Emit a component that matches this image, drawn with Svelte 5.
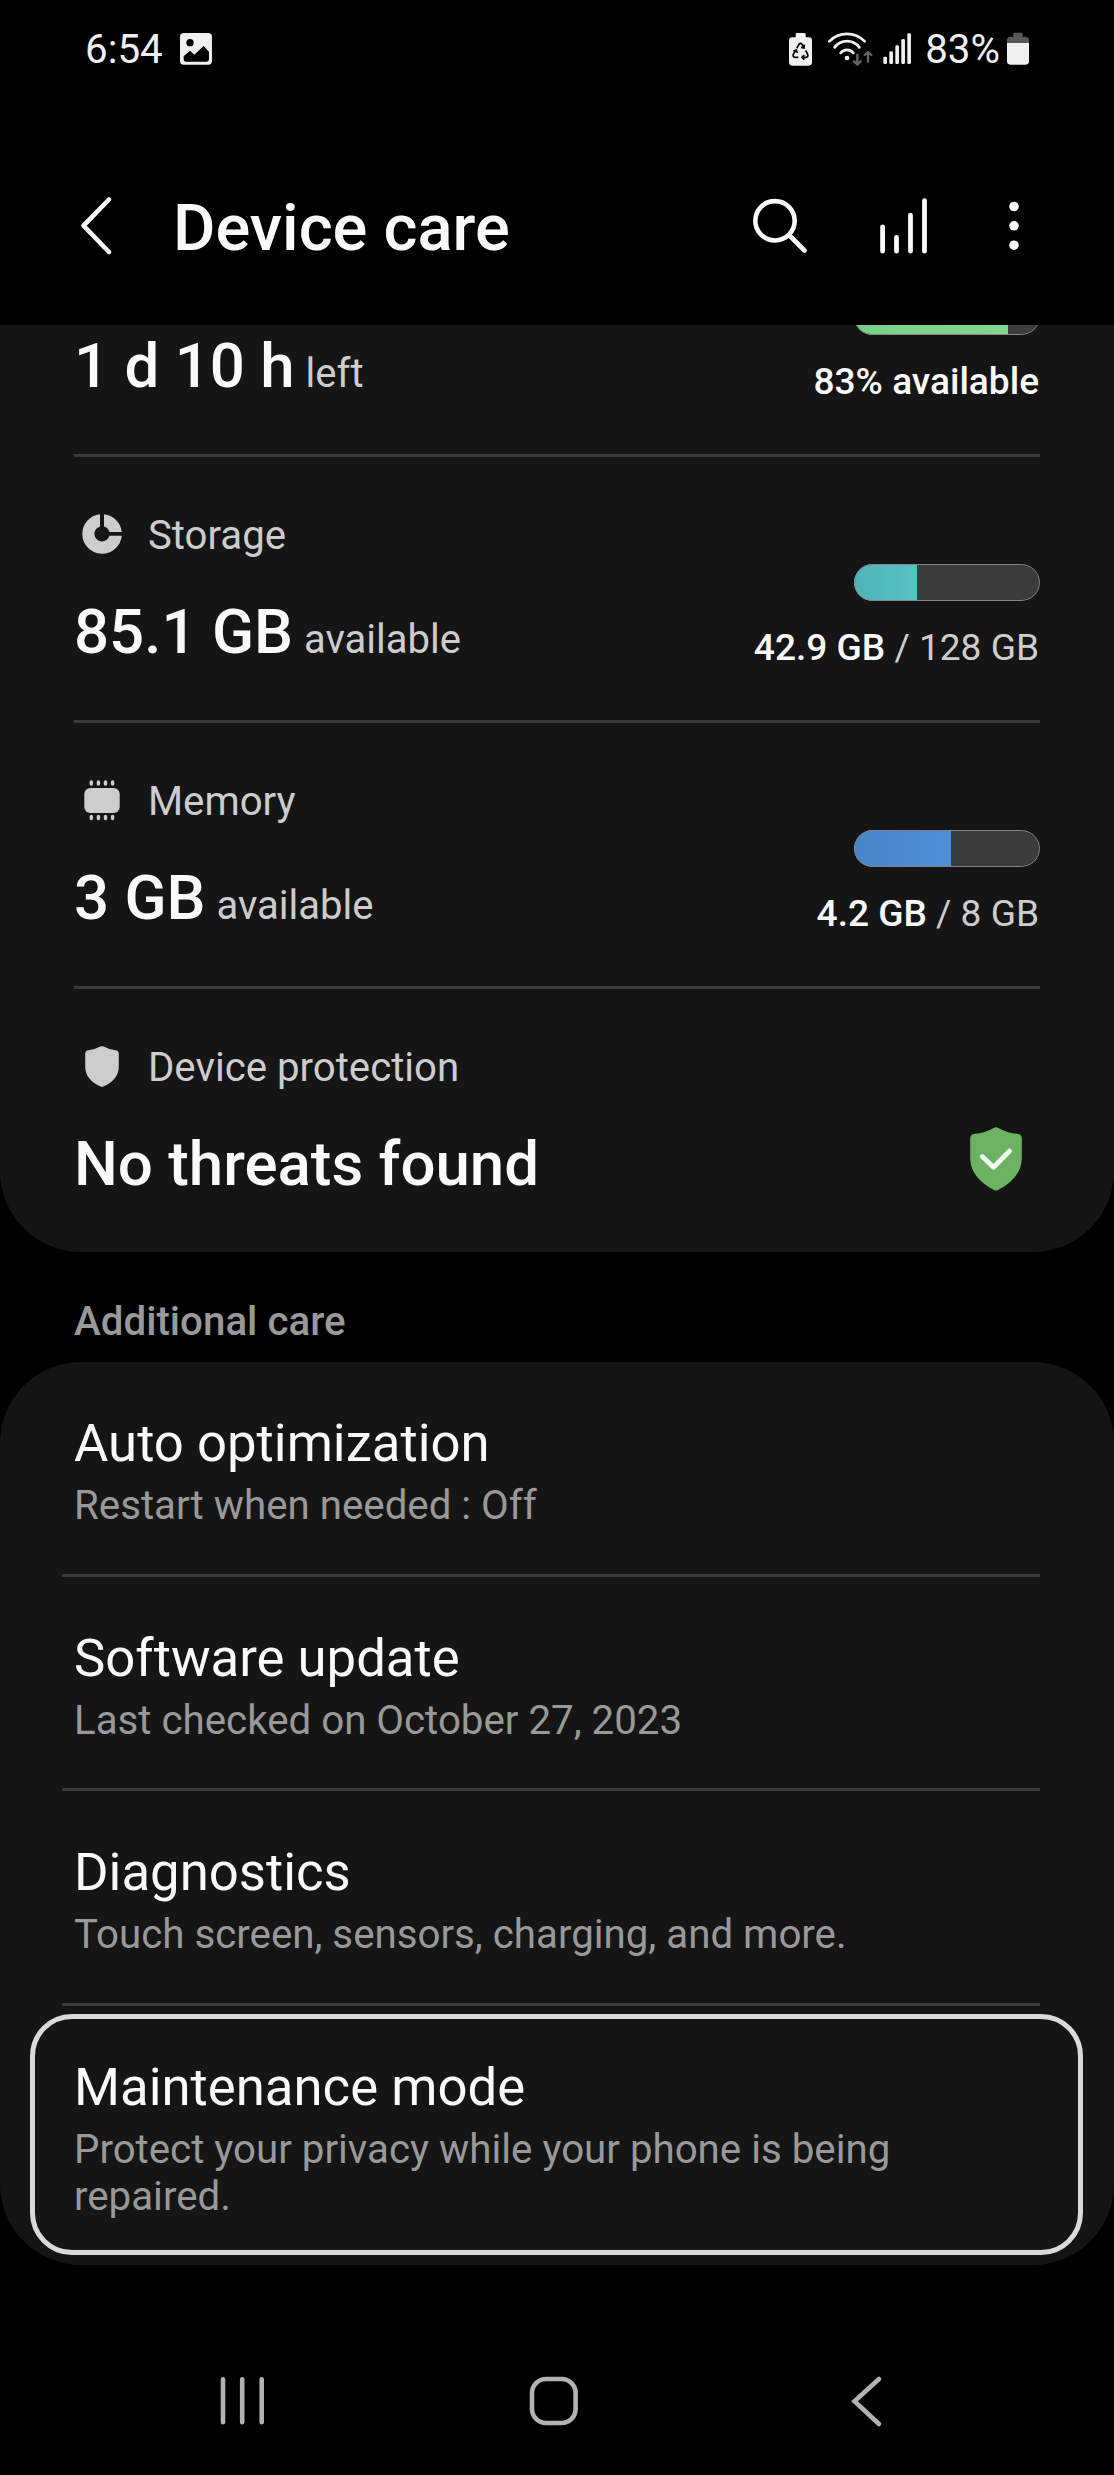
<script>
  const resources = [
    { id: 'battery', value: '1 d 10 h', unit: 'left', used: '83% available', percent: 83 },
    { id: 'storage', label: 'Storage', value: '85.1 GB', unit: 'available', used: '42.9 GB', total: '128 GB', percent: 34 },
    { id: 'memory', label: 'Memory', value: '3 GB', unit: 'available', used: '4.2 GB', total: '8 GB', percent: 52 },
    { id: 'protection', label: 'Device protection', value: 'No threats found' }
  ];

  const options = [
    { title: 'Auto optimization', detail: 'Restart when needed : Off' },
    { title: 'Software update', detail: 'Last checked on October 27, 2023' },
    { title: 'Diagnostics', detail: 'Touch screen, sensors, charging, and more.' },
    { title: 'Maintenance mode', detail: 'Protect your privacy while your phone is being repaired.', focused: true }
  ];
</script>

<div class="phone">
  <div class="status">
    <div class="status-left">
      <span>6:54</span>
      <svg width="32.3" height="40" viewBox="361 57 97 120" fill="#f0f0f0">
        <rect x="361" y="69" width="96" height="95" rx="11" />
        <circle cx="391" cy="98" r="11" fill="#000" />
        <path d="M372 139 391 122 404 134 432 108 448 125V147Q448 155 440 155H380Q372 155 372 147Z" fill="#000" />
      </svg>
    </div>
    <div class="status-right">
      <svg width="23" height="40" viewBox="57 57 69 120" fill="#f0f0f0">
        <path d="M77 82V73Q77 69 81 69H103Q107 69 107 73V82H116Q126 82 126 92V157Q126 167 116 167H67Q57 167 57 157V92Q57 82 67 82Z" />
        <g fill="none" stroke="#000" stroke-width="5">
          <path d="M80 115 87 103Q91 97 96 103L101 112M103 104 102 114 93 112" />
          <path d="M78 120 70 133Q67 141 75 142H85M70 123 79 120 82 129" />
          <path d="M107 121 113 133Q116 141 108 142H97M103 135 96 142 103 149" />
        </g>
      </svg>
      <svg class="wifi" width="45" height="40" viewBox="174 57 135 120" fill="none" stroke="#f0f0f0" stroke-width="8" stroke-linecap="round">
        <path d="M178 94A73.6 73.6 0 0 1 284 94M194 112A46 46 0 0 1 268 112M212 129A24 24 0 0 1 250 129" />
        <circle cx="231" cy="144" r="7" fill="#f0f0f0" stroke="none" />
        <path d="M262 134V162M252 154 262 163 272 154M294 155V126M284 135 294 126 304 135" stroke="#666" stroke-width="7" />
      </svg>
      <svg class="signal" width="28.3" height="40" viewBox="338 57 85 120" fill="#f0f0f0">
        <rect x="339" y="140" width="11" height="22" rx="4" />
        <rect x="357" y="124" width="11" height="38" rx="4" />
        <rect x="375" y="106" width="11" height="56" rx="4" />
        <rect x="393" y="87" width="11" height="75" rx="4" />
        <rect x="411" y="70" width="11" height="92" rx="4" />
      </svg>
      <span>83%</span>
      <svg class="charge" width="22" height="40" viewBox="710 57 66 120">
        <path d="M729 80V72Q729 68 733 68H753Q757 68 757 72V80H765Q776 80 776 91V104H710V91Q710 80 721 80Z" fill="#585858" />
        <path d="M710 99H776V154Q776 164 766 164H720Q710 164 710 154Z" fill="#f0f0f0" />
      </svg>
    </div>
  </div>

  <header>
    <svg class="back" width="40" height="64" viewBox="76 194 40 64" fill="none" stroke="#fafafa" stroke-width="4.6" stroke-linecap="round" stroke-linejoin="round">
      <path d="M109 199.5 83.5 225.7 109 252" />
    </svg>
    <h1>Device care</h1>
    <svg width="56" height="64" viewBox="752 194 56 64" fill="none" stroke="#fafafa" stroke-width="4.6" stroke-linecap="round">
      <circle cx="775" cy="220.8" r="19.7" />
      <path d="M789.5 235.5 804.5 250.5" />
    </svg>
    <svg class="usage-icon" width="48" height="64" viewBox="880 194 48 64" fill="none" stroke="#fafafa" stroke-width="4.8" stroke-linecap="round">
      <path d="M882.6 226.8V251.2M896.5 237.5V251.2M910.5 215.2V251.2M924.5 200.6V251.2" />
    </svg>
    <svg class="more" width="12" height="64" viewBox="1007.7 194 12 64" fill="#fafafa">
      <circle cx="1013.7" cy="206.5" r="4.8" />
      <circle cx="1013.7" cy="225.8" r="4.8" />
      <circle cx="1013.7" cy="245.2" r="4.8" />
    </svg>
  </header>

  <section class="card resources">
    {#each resources as item}
      <div class="resource {item.id}">
        <div class="summary">
          {#if item.label}
            <div class="label">
              <svg width="40" height="44" viewBox="0 0 40 44" fill="#cdcdcd">
                {#if item.id === 'storage'}
                  <path d="M18 .2A19.8 19.8 0 1 0 39.8 21.8H27.4A7.6 7.6 0 1 1 18 12.6ZM22 .2A19.8 19.8 0 0 1 39.7 18H27.4A7.6 7.6 0 0 0 22 12.6Z" />
                {:else if item.id === 'memory'}
                  <rect x="2.3" y="8" width="35.4" height="25" rx="6" />
                  <path d="M9.3 2V4M16.4 2V4M23.5 2V4M30.6 2V4M9.3 36.5V38.5M16.4 36.5V38.5M23.5 36.5V38.5M30.6 36.5V38.5" stroke="#cdcdcd" stroke-width="3.4" stroke-linecap="round" />
                {:else}
                  <path d="M18.3.6Q20-.2 21.7.6Q27 3.6 33.5 4.2Q36.8 4.5 36.8 7.8V21Q36.4 34 21.4 40.5Q20 41.2 18.6 40.5Q3.6 34 3.2 21V7.8Q3.2 4.5 6.5 4.2Q13 3.6 18.3.6Z" />
                {/if}
              </svg>
              <span>{item.label}</span>
            </div>
          {/if}
          <div class="value">{item.value}{#if item.unit}<small>&nbsp;{item.unit}</small>{/if}</div>
        </div>
        {#if item.used}
          <div class="usage">
            <div class="meter"><div class="fill" style="width: {item.percent}%"></div></div>
            <div class="amount"><b>{item.used}</b>{#if item.total}&nbsp;/ {item.total}{/if}</div>
          </div>
        {:else}
          <svg class="shield" width="52" height="64" viewBox="0 0 52 64">
            <path d="M23.6.9Q26-.4 28.4.9Q37 6 47.5 6.8Q51.8 7.2 51.8 11.5V32Q51 51 28 63Q26 64 24 63Q1 51 .2 32V11.5Q.2 7.2 4.5 6.8Q15 6 23.6.9Z" fill="#6bb363" />
            <path d="M12.3 29.5 23.5 40.3 39.5 24" fill="none" stroke="#f2faf1" stroke-width="4.8" stroke-linecap="round" stroke-linejoin="round" />
          </svg>
        {/if}
      </div>
    {/each}
  </section>

  <h2>Additional care</h2>

  <section class="card options">
    {#each options as option}
      <div class="option" class:focused={option.focused}>
        <div class="title">{option.title}</div>
        <div class="detail">{option.detail}</div>
      </div>
    {/each}
  </section>

  <nav>
    <svg width="60" height="60" viewBox="0 0 60 60" stroke-linecap="round">
      <path d="M11 8.2V51.2M30.2 8.2V51.2M49.7 8.2V51.2" />
    </svg>
    <svg width="60" height="60" viewBox="0 0 60 60">
      <rect x="8" y="8" width="43.6" height="44" rx="14" />
    </svg>
    <svg width="60" height="60" viewBox="0 0 60 60" stroke-linecap="round">
      <path d="M42 8 17.5 30.2 42 53" />
    </svg>
  </nav>
</div>

<style>
  :global(body) {
    margin: 0;
    background: #000;
  }

  .phone {
    width: 1114px;
    height: 2475px;
    overflow: hidden;
    background: #000;
    color: #fafafa;
    font-family: Roboto, sans-serif;
  }

  svg {
    display: block;
    flex: none;
  }

  .status {
    display: flex;
    justify-content: space-between;
    height: 98px;
    padding: 0 85px;
    box-sizing: border-box;
    color: #f0f0f0;
    font-size: 40.3px;
    line-height: 48px;
  }

  .status-left,
  .status-right {
    display: flex;
    align-items: center;
  }

  .status-left span {
    margin-top: 1px;
  }

  .status-left svg {
    margin-left: 17.5px;
  }

  .status-right span {
    margin: 2px 7px 0 14px;
  }

  .wifi {
    margin-left: 16px;
  }

  .signal {
    margin-left: 10px;
  }

  header {
    display: flex;
    align-items: center;
    height: 227px;
    padding: 55px 94px 26px 76px;
    box-sizing: border-box;
  }

  h1 {
    flex: 1;
    margin: 4px 0 0 57px;
    font-size: 65px;
    font-weight: 500;
    line-height: 76px;
  }

  .usage-icon {
    margin-left: 72px;
  }

  .more {
    margin-left: 80px;
  }

  .card {
    background: #151515;
    overflow: hidden;
  }

  .resources {
    height: 927px;
    padding: 0 74px;
    box-sizing: border-box;
    border-radius: 0 0 81px 81px;
  }

  .resource {
    display: flex;
    justify-content: space-between;
    align-items: flex-end;
    height: 266px;
    box-sizing: border-box;
    border-bottom: 3px solid #3a3a3a;
  }

  .resource.battery {
    height: 132px;
  }

  .resource.protection {
    height: 263px;
    border-bottom: 0;
  }

  .summary {
    padding-bottom: 52px;
  }

  .label {
    display: flex;
    margin-bottom: 36px;
    color: #cdcdcd;
    font-size: 40.2px;
    line-height: 48px;
  }

  .label svg {
    margin: 2px 26px 0 8px;
  }

  .value {
    font-size: 61.8px;
    font-weight: 500;
    line-height: 72px;
    white-space: nowrap;
  }

  .value small {
    color: #cdcdcd;
    font-size: 40px;
    font-weight: 400;
    line-height: 1;
    margin-left: 1px;
  }

  .usage {
    display: flex;
    flex-direction: column;
    align-items: flex-end;
    gap: 25px;
    padding-bottom: 50px;
  }

  .meter {
    position: relative;
    width: 186px;
    height: 37px;
    border-radius: 19px;
    background: #3b3b3b;
    overflow: hidden;
  }

  .meter::after {
    content: '';
    position: absolute;
    inset: 0;
    border: 1.5px solid #858585;
    border-radius: 19px;
  }

  .fill {
    height: 100%;
    background: linear-gradient(90deg, #79cf87, #80d990);
  }

  .storage .fill {
    background: linear-gradient(90deg, #4eb3b6, #55c3c5);
  }

  .memory .fill {
    background: linear-gradient(90deg, #4785c8, #4d90d6);
  }

  .amount {
    margin-right: 1px;
    color: #cdcdcd;
    font-size: 37.1px;
    line-height: 44px;
    white-space: nowrap;
  }

  .amount b {
    color: #fafafa;
    font-weight: 500;
  }

  .shield {
    margin: 0 18px 61px 0;
  }

  h2 {
    height: 110px;
    margin: 0;
    padding: 46px 74px 0;
    box-sizing: border-box;
    color: #999;
    font-size: 40.3px;
    font-weight: 500;
    line-height: 48px;
  }

  .options {
    height: 903px;
    padding: 0 74px 0 62px;
    box-sizing: border-box;
    border-radius: 81px;
  }

  .option {
    height: 214.67px;
    padding: 50px 100px 0 12px;
    box-sizing: border-box;
    border-bottom: 3px solid #3a3a3a;
  }

  .option.focused {
    position: relative;
    height: 259px;
    border-bottom: 0;
  }

  .focused::after {
    content: '';
    position: absolute;
    inset: 8px -43px 10px -32px;
    border: 5px solid #dadada;
    border-radius: 42px;
  }

  .title {
    font-size: 52.7px;
    line-height: 62px;
  }

  .detail {
    margin-top: 8px;
    color: #999;
    font-size: 40.25px;
    line-height: 47.5px;
  }

  nav {
    display: grid;
    grid-template-columns: repeat(3, 312.3px);
    justify-items: center;
    padding: 106px 0 0 86px;
  }

  nav svg {
    fill: none;
    stroke: #b2b2b2;
    stroke-width: 4.6;
  }
</style>
